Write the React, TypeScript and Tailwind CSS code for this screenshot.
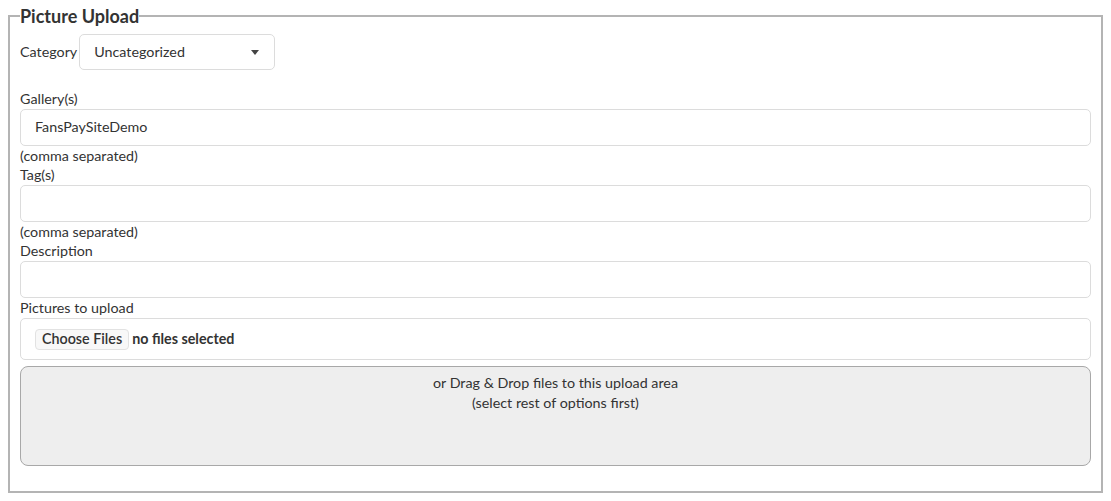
function TextInput({ value }: { value?: string }) {
  return (
    <div className="h-[37px] w-full rounded-[5px] border border-[#dcdcdc] bg-white pl-[14px] flex items-center text-[#333]">
      {value}
    </div>
  );
}

export default function App() {
  return (
    <div className="bg-white min-h-[501px] pt-[4px] font-['Lato',sans-serif] text-[14.3px] leading-[19.5px] text-[#333]">
      <fieldset className="mx-2 border-2 border-[#b4b4b4] px-[10px] pb-[25px]">
        <legend className="text-[18px] leading-[24px] font-bold text-[#333] px-0">Picture Upload</legend>

        <div className="mt-[6px] flex items-center gap-[2px]">
          <span>Category</span>
          <div className="h-[36px] w-[196px] rounded-[5px] border border-[#dcdcdc] pl-[14px] pr-[14px] flex items-center justify-between">
            <span>Uncategorized</span>
            <svg width="8" height="5" viewBox="0 0 8 5" className="mr-[1px]">
              <path d="M0 0h8L4 5z" fill="#444" />
            </svg>
          </div>
        </div>

        <div className="mt-[19px]">Gallery(s)</div>
        <TextInput value="FansPaySiteDemo" />
        <div>(comma separated)</div>
        <div>Tag(s)</div>
        <TextInput />
        <div>(comma separated)</div>
        <div>Description</div>
        <TextInput />
        <div className="pb-[1px]">Pictures to upload</div>
        <div className="h-[42px] w-full rounded-[5px] border border-[#dcdcdc] pl-[14px] flex items-center gap-[3px]">
          <span className="h-[21px] px-[6px] rounded-[4px] border border-[#e2e2e2] bg-[#f8f8f8] font-semibold flex items-center">
            Choose Files
          </span>
          <span className="font-bold">no files selected</span>
        </div>

        <div className="mt-[6px] h-[100px] w-full rounded-[8px] border border-[#a8a8a8] bg-[#eeeeee] pt-[6px] text-center">
          <div>or Drag &amp; Drop files to this upload area</div>
          <div>(select rest of options first)</div>
        </div>
      </fieldset>
    </div>
  );
}
